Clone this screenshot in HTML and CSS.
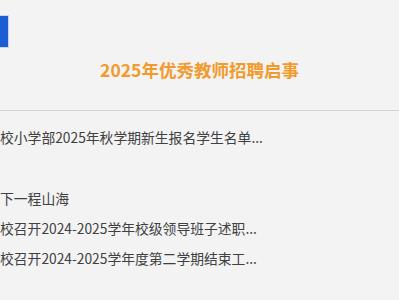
FILE: index.html
```html
<!DOCTYPE html>
<html lang="zh-CN">
<head>
<meta charset="utf-8">
<title>2025年优秀教师招聘启事</title>
<link rel="stylesheet" href="styles.css">
</head>
<body>
<div class="page">
  <div class="logo"></div>
  <h1 class="title">2025年优秀教师招聘启事</h1>
  <div class="divider"></div>
  <ul class="news">
    <li>校小学部2025年秋学期新生报名学生名单...</li>
    <li class="blank"></li>
    <li>下一程山海</li>
    <li>校召开2024-2025学年校级领导班子述职...</li>
    <li>校召开2024-2025学年度第二学期结束工...</li>
  </ul>
</div>
</body>
</html>
```
FILE: styles.css
```css
html, body {
  margin: 0;
  padding: 0;
  background: #f3f3f3;
}
.page {
  width: 399px;
  height: 300px;
  overflow: hidden;
  font-family: "Noto Sans CJK SC", "Noto Sans", sans-serif;
  display: flex;
  flex-direction: column;
}
.logo {
  margin-top: 15px;
  width: 8px;
  height: 31px;
  background: #1c5dd3;
  border: 1px solid #c9d6ee;
  border-left: none;
}
.title {
  margin: 8px 0 0;
  font-size: 17.5px;
  line-height: 28px;
  font-weight: 700;
  color: #f29a2c;
  text-align: center;
}
.divider {
  margin-top: 26px;
  height: 1px;
  background: #d3d3d3;
}
.news {
  list-style: none;
  margin: 11px 0 0;
  padding: 0;
}
.news li {
  height: 30.3px;
  line-height: 30.3px;
  font-size: 13.8px;
  color: #404040;
  white-space: nowrap;
}
```
